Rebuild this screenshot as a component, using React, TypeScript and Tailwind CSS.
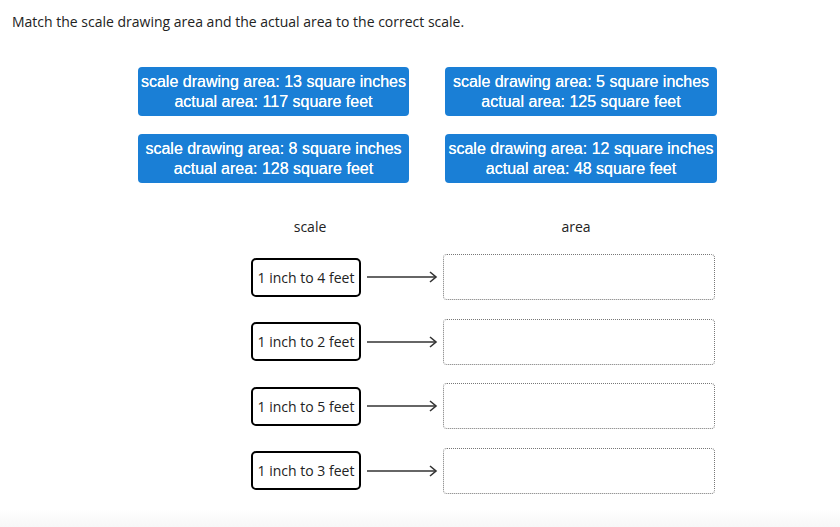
const cards = [
  { drawing: 13, actual: 117 },
  { drawing: 5, actual: 125 },
  { drawing: 8, actual: 128 },
  { drawing: 12, actual: 48 },
];

const scales = ["1 inch to 4 feet", "1 inch to 2 feet", "1 inch to 5 feet", "1 inch to 3 feet"];

const Arrow = () => (
  <svg width="72" height="12" viewBox="0 0 72 12" className="shrink-0">
    <line x1="0" y1="6" x2="69" y2="6" stroke="#333" strokeWidth="1.3" />
    <polyline points="63,1 69,6 63,11" fill="none" stroke="#333" strokeWidth="1.6" />
  </svg>
);

export default function App() {
  return (
    <div
      className="relative w-[840px] h-[527px] bg-white text-[#222] overflow-hidden"
      style={{ fontFamily: '"Open Sans", sans-serif' }}
    >
      <p className="pt-3 pl-3 text-[14px] leading-5">
        Match the scale drawing area and the actual area to the correct scale.
      </p>

      <div className="mt-[35px] ml-[138px] grid grid-cols-[271px_272px] gap-x-[36px] gap-y-[18px]">
        {cards.map((c) => (
          <div
            key={c.drawing}
            className="h-[49px] rounded-[4px] bg-[#1a7fd6] text-white flex flex-col items-center justify-center text-[16px] leading-5 [text-shadow:0_0_0.4px_#fff]"
            style={{ fontFamily: '"Liberation Sans", Arial, sans-serif' }}
          >
            <span>scale drawing area: {c.drawing} square inches</span>
            <span>actual area: {c.actual} square feet</span>
          </div>
        ))}
      </div>

      <div className="mt-[34px] ml-[251px] flex text-[14px] leading-5">
        <span className="w-[118px] text-center">scale</span>
        <span className="ml-[72px] w-[270px] text-center">area</span>
      </div>

      <div className="mt-[17px] ml-[251px] flex flex-col gap-[18.5px]">
        {scales.map((s) => (
          <div key={s} className="flex items-center h-[46px]">
            <div className="w-[110px] h-[39px] border-2 border-black rounded-[5px] flex items-center justify-center text-[14px]">
              {s}
            </div>
            <div className="ml-[6px] mr-[4px] flex items-center">
              <Arrow />
            </div>
            <div className="w-[272px] h-[46px] border border-dotted border-[#777] rounded-[4px]" />
          </div>
        ))}
      </div>

      <div className="absolute left-0 right-0 bottom-0 h-[18px] bg-gradient-to-b from-white to-[#f7f7f7]" />
    </div>
  );
}
